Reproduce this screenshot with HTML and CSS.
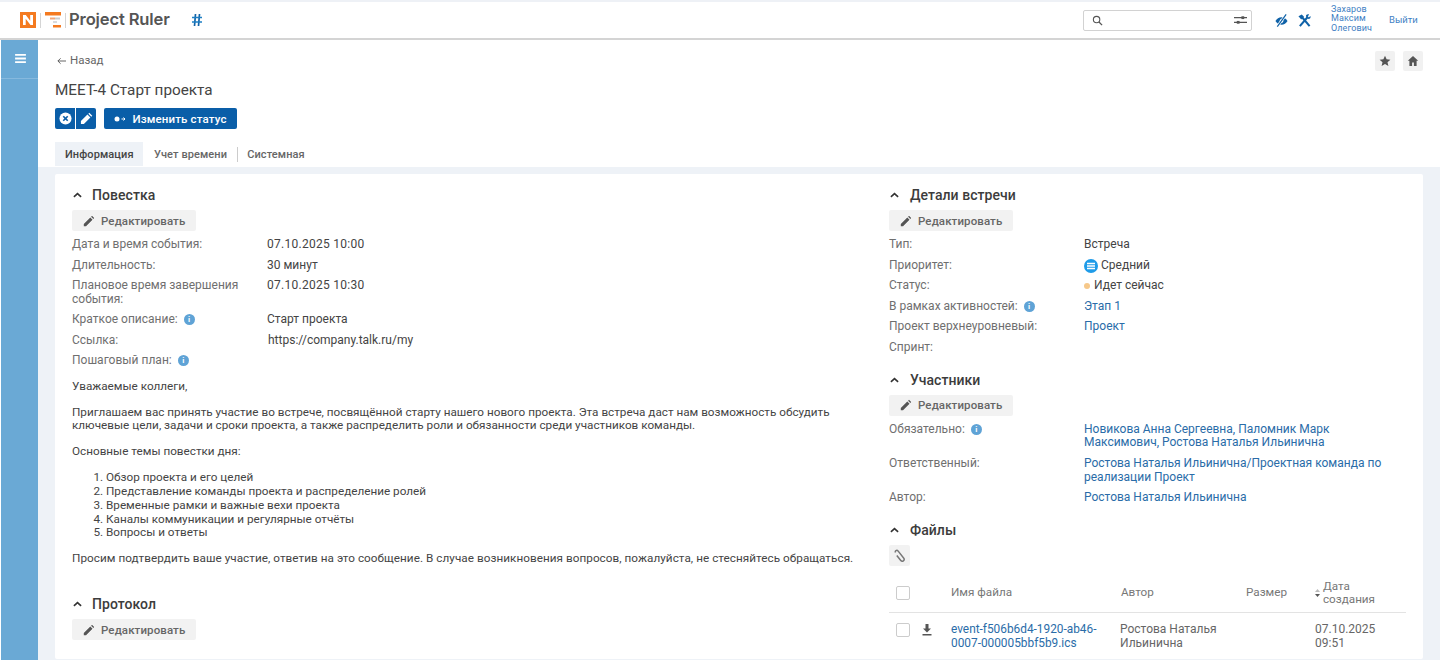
FILE: index.html
```html
<!DOCTYPE html>
<html lang="ru">
<head>
<meta charset="utf-8">
<title>MEET-4 Старт проекта</title>
<link rel="stylesheet" href="styles.css">
</head>
<body>
<header class="topbar">
  <div class="brand">
    <svg class="logo-n" viewBox="0 0 16 16"><rect width="16" height="16" fill="#f47a20"/><path d="M3 13V3h2.800l4.400 5.800V3H13v10h-2.500L5.700 6.800V13z" fill="#fff"/></svg>
    <span class="brand-sep"></span>
    <svg class="logo-t" viewBox="0 0 16 16"><path d="M0 0h16v3.500H0z" fill="#f47a20"/><path d="M5 5.500h5v2H5z" fill="#f2a678"/><path d="M10 5.500h5v2h-5z" fill="#c9ccd0"/><path d="M8 9h4v2H8z" fill="#d8dadd"/><path d="M8 13h8v2.500H8z" fill="#f47a20"/></svg>
    <span class="brand-sep sep-b"></span>
    <span class="brand-name">Project Ruler</span>
    <svg class="hash" viewBox="0 0 12 14"><path d="M4.500 1 3.500 13M8.500 1 7.500 13" fill="none" stroke="#1464a8" stroke-width="1.700"/><path d="M1 4.500h10M1 9h10" fill="none" stroke="#1e7fc4" stroke-width="1.500"/></svg>
  </div>
  <div class="top-right">
    <div class="search">
      <svg class="search-ico" viewBox="0 0 12 12"><circle cx="5" cy="5" r="3.500" fill="none" stroke="#555" stroke-width="1.200"/><path d="M7.600 7.600 11 11" stroke="#555" stroke-width="1.400"/></svg>
      <svg class="search-filter" viewBox="0 0 14 10"><path d="M0 2.500h14M0 7.500h14" stroke="#555" stroke-width="1.200"/><rect x="8" y="1" width="3" height="3" fill="#555"/><rect x="3" y="6" width="3" height="3" fill="#555"/></svg>
    </div>
    <svg class="top-ico" viewBox="0 0 14 14"><path d="M.5 7.500C2 5 4.200 3.500 7 3.500s5 1.500 6.500 4C12 10 9.800 11.500 7 11.500S2 10 .5 7.500z" fill="#0f62a8"/><circle cx="7" cy="7.500" r="2" fill="#fff"/><path d="M12 .5 2.500 13.500" stroke="#fff" stroke-width="2.800"/><path d="M12 .5 2.500 13.500" stroke="#0f62a8" stroke-width="1.300"/></svg>
    <svg class="top-ico tools" viewBox="0 0 14 14"><path d="M4 3 12.500 13" stroke="#0f62a8" stroke-width="2.200"/><path d="M10.200 3.500 2 13" stroke="#0f62a8" stroke-width="2.200"/><path d="M.5 2.500 4 .5 6.500 3 3.500 6z" fill="#0f62a8"/><path d="M8.500 2.500c0-1.800 2-2.700 3.500-1.800L10.500 2.500l1.200 1.200L13.300 2.200c.8 1.600-.6 3.500-2.600 3z" fill="#0f62a8"/></svg>
    <a class="user">Захаров<br>Максим<br>Олегович</a>
    <a class="logout">Выйти</a>
  </div>
</header>
<div class="shell">
  <aside class="rail">
    <div class="rail-top">
      <svg class="burger" viewBox="0 0 12 10"><path d="M0 0h12v2H0zM0 4h12v2H0zM0 8h12v2H0z" fill="#fff"/></svg>
    </div>
  </aside>
  <main class="main">
    <section class="head">
      <div class="head-actions">
        <span class="square"><svg viewBox="0 0 12 12"><path d="M6 .8l1.600 3.500 3.800.4-2.900 2.500.9 3.800L6 8.900 2.600 11l.9-3.800L.6 4.700l3.800-.4z" fill="#555"/></svg></span>
        <span class="square"><svg viewBox="0 0 12 12"><path d="M6 1 .8 5.800h1.600V11h2.700V7.600h1.800V11h2.700V5.800h1.600z" fill="#555"/></svg></span>
      </div>
      <a class="back"><svg class="back-arrow" viewBox="0 0 10 8"><path d="M10 4H1M4 1 1 4l3 3" fill="none" stroke="#555" stroke-width="1"/></svg>Назад</a>
      <h1 class="title">MEET-4 Старт проекта</h1>
      <div class="actions">
        <div class="btn-group">
          <span class="btn-ico"><svg viewBox="0 0 14 14"><circle cx="7" cy="7" r="6.500" fill="#fff"/><path d="M4.600 4.600l4.800 4.800M9.400 4.600l-4.800 4.800" stroke="#0a5ea8" stroke-width="1.800"/></svg></span>
          <span class="btn-ico"><svg viewBox="0 0 14 14"><path d="M1 13v-3.200L8 2.800 11.200 6l-7 7zM9 1.800l1-1L13.200 4l-1 1z" fill="#fff"/></svg></span>
        </div>
        <button class="btn-status"><svg viewBox="0 0 12 6"><circle cx="3" cy="3" r="2.500" fill="#fff"/><path d="M7.500 3h3.500M9.500 1.500 11 3 9.500 4.500" stroke="#fff" fill="none"/></svg>Изменить статус</button>
      </div>
      <nav class="tabs">
        <span class="tab active">Информация</span>
        <span class="tab">Учет времени</span>
        <span class="tab-sep"></span>
        <span class="tab">Системная</span>
      </nav>
    </section>
    <section class="canvas">
      <div class="card">
        <div class="col col-left">
          <h2 class="sec"><svg class="chev" viewBox="0 0 10 6"><path d="M1 5l4-3.600L9 5" fill="none" stroke="#333" stroke-width="1.800"/></svg>Повестка</h2>
          <button class="edit"><svg viewBox="0 0 12 12"><path d="M.8 11.200V9L7.300 2.500l2.200 2.200L3 11.200zM8.100 1.700 9 .8l2.200 2.200-.9.9z" fill="#555"/></svg>Редактировать</button>
          <dl class="rows">
            <div class="row"><dt>Дата и время события:</dt><dd class="num">07.10.2025 10:00</dd></div>
            <div class="row"><dt>Длительность:</dt><dd>30 минут</dd></div>
            <div class="row"><dt>Плановое время завершения события:</dt><dd class="num">07.10.2025 10:30</dd></div>
            <div class="row"><dt>Краткое описание: <i class="info">i</i></dt><dd>Старт проекта</dd></div>
            <div class="row"><dt>Ссылка:</dt><dd class="url">https://company.talk.ru/my</dd></div>
            <div class="row"><dt>Пошаговый план: <i class="info">i</i></dt><dd></dd></div>
          </dl>
          <div class="body-text">
            <p>Уважаемые коллеги,</p>
            <p>Приглашаем вас принять участие во встрече, посвящённой старту нашего нового проекта. Эта встреча даст нам возможность обсудить ключевые цели, задачи и сроки проекта, а также распределить роли и обязанности среди участников команды.</p>
            <p>Основные темы повестки дня:</p>
            <ol>
              <li>Обзор проекта и его целей</li>
              <li>Представление команды проекта и распределение ролей</li>
              <li>Временные рамки и важные вехи проекта</li>
              <li>Каналы коммуникации и регулярные отчёты</li>
              <li>Вопросы и ответы</li>
            </ol>
            <p class="closing">Просим подтвердить ваше участие, ответив на это сообщение. В случае возникновения вопросов, пожалуйста, не стесняйтесь обращаться.</p>
          </div>
          <h2 class="sec sec-protocol"><svg class="chev" viewBox="0 0 10 6"><path d="M1 5l4-3.600L9 5" fill="none" stroke="#333" stroke-width="1.800"/></svg>Протокол</h2>
          <button class="edit"><svg viewBox="0 0 12 12"><path d="M.8 11.200V9L7.300 2.500l2.200 2.200L3 11.200zM8.100 1.700 9 .8l2.200 2.200-.9.9z" fill="#555"/></svg>Редактировать</button>
        </div>
        <div class="col col-right">
          <h2 class="sec"><svg class="chev" viewBox="0 0 10 6"><path d="M1 5l4-3.600L9 5" fill="none" stroke="#333" stroke-width="1.800"/></svg>Детали встречи</h2>
          <button class="edit"><svg viewBox="0 0 12 12"><path d="M.8 11.200V9L7.300 2.500l2.200 2.200L3 11.200zM8.100 1.700 9 .8l2.200 2.200-.9.9z" fill="#555"/></svg>Редактировать</button>
          <dl class="rows">
            <div class="row"><dt>Тип:</dt><dd>Встреча</dd></div>
            <div class="row"><dt>Приоритет:</dt><dd><svg class="prio" viewBox="0 0 14 14"><circle cx="7" cy="7" r="7" fill="#1e9be8"/><path d="M3 4.500h8M3 7h8M3 9.500h8" stroke="#fff" stroke-width="1.300"/></svg>Средний</dd></div>
            <div class="row"><dt>Статус:</dt><dd><i class="dot"></i>Идет сейчас</dd></div>
            <div class="row"><dt>В рамках активностей: <i class="info">i</i></dt><dd><a>Этап 1</a></dd></div>
            <div class="row"><dt>Проект верхнеуровневый:</dt><dd><a>Проект</a></dd></div>
            <div class="row"><dt>Спринт:</dt><dd></dd></div>
          </dl>
          <h2 class="sec sec-people"><svg class="chev" viewBox="0 0 10 6"><path d="M1 5l4-3.600L9 5" fill="none" stroke="#333" stroke-width="1.800"/></svg>Участники</h2>
          <button class="edit edit-people"><svg viewBox="0 0 12 12"><path d="M.8 11.200V9L7.300 2.500l2.200 2.200L3 11.200zM8.100 1.700 9 .8l2.200 2.200-.9.9z" fill="#555"/></svg>Редактировать</button>
          <dl class="rows">
            <div class="row"><dt>Обязательно: <i class="info">i</i></dt><dd><a>Новикова Анна Сергеевна, Паломник Марк Максимович, Ростова Наталья Ильинична</a></dd></div>
            <div class="row"><dt>Ответственный:</dt><dd><a>Ростова Наталья Ильинична/Проектная команда по реализации Проект</a></dd></div>
            <div class="row"><dt>Автор:</dt><dd><a>Ростова Наталья Ильинична</a></dd></div>
          </dl>
          <h2 class="sec sec-files"><svg class="chev" viewBox="0 0 10 6"><path d="M1 5l4-3.600L9 5" fill="none" stroke="#333" stroke-width="1.800"/></svg>Файлы</h2>
          <button class="attach"><svg viewBox="0 0 12 14"><path d="M1.500 3.500c-.8-1.500 1.300-3 2.500-1.600l5.800 7.400c1.500 2-1.600 4-3 2.200L2.800 6.500" fill="none" stroke="#777" stroke-width="1.500"/></svg></button>
          <div class="file-table">
            <div class="tr th">
              <span class="c-check"><i class="cb"></i></span>
              <span class="c-dl"></span>
              <span class="c-name">Имя файла</span>
              <span class="c-author">Автор</span>
              <span class="c-size">Размер</span>
              <span class="c-date"><svg class="sort" viewBox="0 0 5 8"><path d="M2.500 0 5 3H0z" fill="#bbb"/><path d="M2.500 8 0 5h5z" fill="#555"/></svg>Дата создания</span>
            </div>
            <div class="tr td">
              <span class="c-check"><i class="cb"></i></span>
              <span class="c-dl"><svg viewBox="0 0 10 12"><path d="M3.500 0h3v4.500H9L5 8.500 1 4.500h2.500zM.5 10h9v1.500h-9z" fill="#555"/></svg></span>
              <a class="c-name">event-f506b6d4-1920-ab46-0007-000005bbf5b9.ics</a>
              <span class="c-author">Ростова Наталья Ильинична</span>
              <span class="c-size"></span>
              <span class="c-date">07.10.2025 09:51</span>
            </div>
          </div>
        </div>
      </div>
    </section>
  </main>
</div>
</body>
</html>
```
FILE: styles.css
```css
* { box-sizing: border-box; }
html, body { margin: 0; height: 660px; overflow: hidden; }
body { font-family: Roboto, "Liberation Sans", sans-serif; font-size: 12px; line-height: 13.75px; color: #444; background: #fff; }
a { color: #2a6ca8; text-decoration: none; }
svg { display: block; flex: none; }
p { margin: 0; }

.topbar { height: 40px; padding-top: 2px; display: flex; justify-content: space-between; background: #fff; border-bottom: 2px solid #d4d4d4; box-shadow: inset 0 2px 0 #eef1f6; }
.brand { display: flex; align-items: center; padding-left: 20px; }
.logo-n { width: 16px; height: 16px; }
.brand-sep { width: 1px; height: 15px; background: #d5d5d5; margin: 0 4px; }
.logo-t { width: 16px; height: 16px; }
.sep-b { margin-right: 3px; }
.brand-name { font-size: 16.600px; font-weight: 600; color: #555; font-family: Inter, Roboto, sans-serif; letter-spacing: -.15px; width: 102px; white-space: nowrap; }
.hash { width: 12px; height: 14px; margin-left: 20px; }
.top-right { display: flex; align-items: center; padding-right: 23px; }
.search { width: 169px; height: 21px; border: 1px solid #d2d2d2; border-radius: 2px; display: flex; align-items: center; justify-content: space-between; padding: 0 4px 0 8px; }
.search-ico { width: 11px; height: 11px; }
.search-filter { width: 13px; height: 10px; }
.top-ico { width: 13px; height: 13px; margin-left: 23px; }
.top-ico.tools { margin-left: 10px; }
.user { font-size: 9px; line-height: 9.2px; width: 58px; margin-left: 20px; color: #3f7fc4; margin-top: -2px; letter-spacing: .1px; }
.logout { font-size: 9.5px; color: #3f7fc4; width: 28px; }

.shell { display: flex; height: 620px; }
.rail { width: 38px; background: #6aa9d5; margin-left: 1px; flex: none; margin-right: -1px; }
.rail-top { height: 39px; border-bottom: 1px solid #86b9de; display: flex; align-items: center; justify-content: center; padding-bottom: 2px; }
.burger { width: 11px; height: 9px; }
.main { flex: 1; min-width: 0; background: #eef2f7; display: flex; flex-direction: column; }

.head { background: #fff; height: 127px; padding: 14px 17px 0 17px; position: relative; }
.head-actions { position: absolute; right: 17px; top: 11px; display: flex; gap: 8px; }
.square { width: 20px; height: 20px; background: #f1f1f1; border-radius: 2px; display: flex; align-items: center; justify-content: center; }
.square svg { width: 12px; height: 12px; }
.back { display: flex; align-items: center; gap: 4px; color: #666; font-size: 11.5px; height: 14px; padding-left: 2px; }
.back-arrow { width: 9px; height: 8px; }
.title { margin: 13px 0 0; font-size: 15.300px; font-weight: 400; line-height: 18px; color: #444; }
.actions { display: flex; margin-top: 9px; gap: 8px; }
.btn-group { display: flex; gap: 1px; }
.btn-ico { width: 20px; height: 21px; background: #0a5ea8; display: flex; align-items: center; justify-content: center; }
.btn-ico:first-child { border-radius: 2px 0 0 2px; }
.btn-ico:last-child { border-radius: 0 2px 2px 0; }
.btn-ico svg { width: 13px; height: 13px; }
.btn-status { width: 133px; height: 21px; background: #0a5ea8; border: 0; border-radius: 2px; color: #fff; font: 500 11.500px Roboto, sans-serif; letter-spacing: .15px; display: flex; align-items: center; justify-content: center; gap: 6px; padding: 0; }
.btn-status svg { width: 12px; height: 6px; }
.tabs { display: flex; align-items: center; margin-top: 13px; height: 24px; font-size: 11px; font-weight: 500; color: #666; letter-spacing: .1px; }
.tab { padding: 0 10px 0 11px; height: 24px; line-height: 26px; }
.tab.active { background: #eef2f7; color: #444; width: 88px; padding: 0 10px; }
.tab-sep { width: 1px; height: 15px; background: #ccc; }
.tab-sep + .tab { padding-left: 9px; }

.canvas { flex: 1; padding: 7px 17px 0; min-height: 0; }
.card { background: #fff; border-radius: 2px; padding: 12px 17px 0; display: grid; grid-template-columns: 783px 517px; column-gap: 34px; height: 485px; overflow: hidden; }
.sec { margin: 0; font-size: 14px; font-weight: 500; line-height: 18px; color: #3c3c3c; display: flex; align-items: center; letter-spacing: .05px; }
.chev { width: 9px; height: 6px; margin: 0 11px 0 1px; }
.col-left .chev { margin-right: 10px; }
.edit { display: flex; align-items: center; gap: 6px; height: 21px; width: 124px; margin-top: 6px; padding: 0 0 0 11px; border: 0; border-radius: 2px; background: #f2f2f2; color: #666; font: 500 11.500px Roboto, sans-serif; letter-spacing: .1px; }
.edit-people { margin-top: 5.500px; }
.edit svg { width: 12px; height: 12px; }
.rows { margin: 0; padding-top: 3.800px; }
.row { display: grid; grid-template-columns: 195px 1fr; padding: 3.375px 0; align-items: start; }
.row dt { color: #6f6f6f; padding-right: 20px; }
.row dd { margin: 0; color: #444; display: flex; align-items: center; }
.row dd.num { letter-spacing: .27px; }
.row dd a { display: block; }
.col-right .row dd { padding-right: 14px; }
.url { padding-left: 1px; }
.info { display: inline-block; width: 11px; height: 11px; margin: 1px 0 0 3px; border-radius: 50%; background: #5fa3d6; color: #fff; font: 700 8px/11px Roboto, sans-serif; text-align: center; vertical-align: top; }
.prio { width: 14px; height: 14px; margin-right: 3px; }
.dot { width: 6px; height: 6px; border-radius: 50%; background: #f6c88a; margin-right: 4px; }

.body-text { margin-top: 8.200px; color: #444; font-size: 11.720px; }
.body-text p { margin-bottom: 12.250px; }
.body-text .closing { letter-spacing: .045px; white-space: nowrap; margin-top: -.5px; }
.body-text ol { margin: 0 0 12.250px; padding-left: 34px; }
.sec-protocol { margin-top: 29.500px; }
.sec-people { margin-top: 13px; }
.sec-files { margin-top: 13px; }
.attach { display: flex; align-items: center; justify-content: center; width: 21px; height: 21px; margin-top: 6px; padding: 0; border: 0; border-radius: 2px; background: #f2f2f2; }
.attach svg { width: 12px; height: 14px; }

.file-table { margin-top: 8px; font-size: 11.700px; }
.tr { display: grid; grid-template-columns: 27px 35px 170px 125px 69px 1fr; align-items: center; }
.th { height: 39px; border-bottom: 1px solid #e3e3e3; color: #777; }
.th .c-check, .td .c-check { padding-left: 7px; }
.td { padding-top: 10px; color: #666; font-size: 12px; align-items: start; }
.td .c-name { font-size: 11.850px; }
.td .c-author { margin-left: -1px; }
.cb { display: block; width: 14px; height: 14px; border: 1px solid #ccc; border-radius: 2px; background: #fff; }
.c-dl svg { width: 10px; height: 12px; margin: 1px 0 0 6px; }
.c-name { padding-right: 14px; }
.c-date { display: flex; align-items: center; gap: 3px; padding-right: 20px; }
.td .c-date { display: block; }
.sort { width: 5px; height: 8px; }
```
